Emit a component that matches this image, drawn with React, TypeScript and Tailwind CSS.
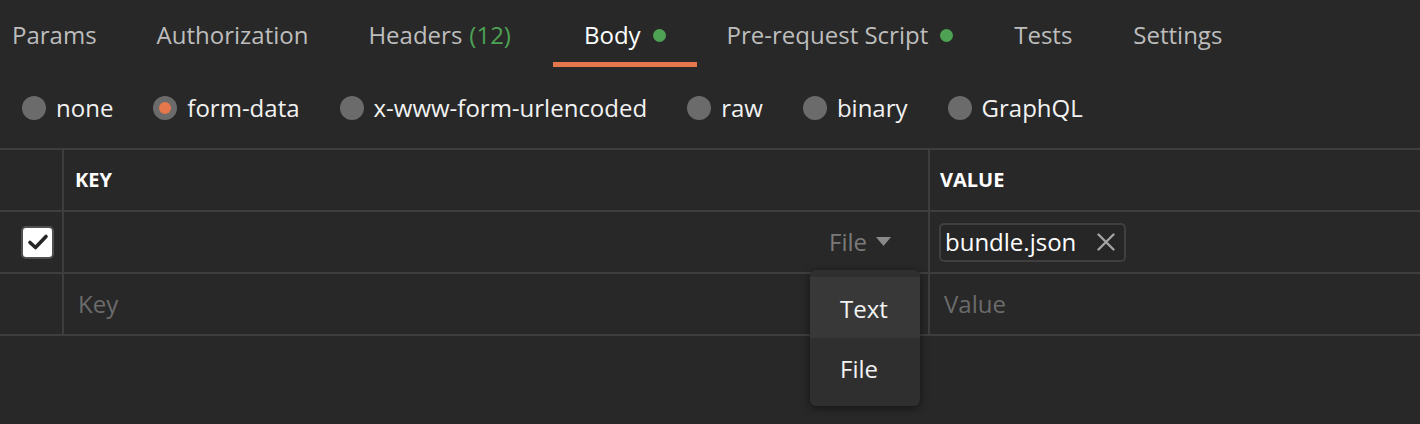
import React from "react";

const font = { fontFamily: '"Open Sans", "Noto Sans", sans-serif' };

function Dot() {
  return <span className="inline-block w-[13px] h-[13px] rounded-full bg-[#4da254] ml-[12px]" />;
}

function Radio({ label, selected }: { label: string; selected?: boolean }) {
  return (
    <div className="flex items-center">
      <span className="w-[24px] h-[24px] rounded-full bg-[#6b6b6b] flex items-center justify-center">
        {selected && <span className="w-[12px] h-[12px] rounded-full bg-[#e5774c]" />}
      </span>
      <span className="ml-[10px] text-[24px] text-[#f2f2f2] leading-none">{label}</span>
    </div>
  );
}

export default function App() {
  return (
    <div className="w-[1420px] h-[424px] bg-[#282828] overflow-hidden relative" style={font}>
      {/* Tabs */}
      <div className="flex h-[67px] text-[24px] text-[#bdbdbd]">
        <div className="flex items-center pt-[3px] pl-[12px]">Params</div>
        <div className="flex items-center pt-[3px] ml-[60px]">Authorization</div>
        <div className="flex items-center pt-[3px] ml-[60px]">
          Headers<span className="text-[#4da254] ml-[7px]">(12)</span>
        </div>
        <div className="relative flex items-center pt-[3px] ml-[42px] px-[31px] text-white">
          Body
          <Dot />
          <span className="absolute left-0 right-0 bottom-0 h-[5px] bg-[#e5774c]" />
        </div>
        <div className="flex items-center pt-[3px] ml-[30px]">
          Pre-request Script
          <Dot />
        </div>
        <div className="flex items-center pt-[3px] ml-[61px]">Tests</div>
        <div className="flex items-center pt-[3px] ml-[61px]">Settings</div>
      </div>

      {/* Radios */}
      <div className="flex items-center h-[81px] pl-[22px] gap-[40px]">
        <Radio label="none" />
        <Radio label="form-data" selected />
        <Radio label="x-www-form-urlencoded" />
        <Radio label="raw" />
        <Radio label="binary" />
        <Radio label="GraphQL" />
      </div>

      {/* Table */}
      <div className="border-t-2 border-[#3e3e3e]">
        <div className="flex h-[62px] border-b-2 border-[#3e3e3e]">
          <div className="w-[64px] border-r-2 border-[#3e3e3e] shrink-0" />
          <div className="w-[866px] border-r-2 border-[#3e3e3e] shrink-0 flex items-center pl-[11px] text-[20px] font-bold text-white">
            KEY
          </div>
          <div className="flex-1 flex items-center pl-[10px] text-[20px] font-bold text-white">VALUE</div>
        </div>
        <div className="flex h-[62px] border-b-2 border-[#3e3e3e]">
          <div className="w-[64px] border-r-2 border-[#3e3e3e] shrink-0 flex items-center pl-[21px]">
            <span className="w-[33px] h-[33px] rounded-[5px] bg-white border-2 border-[#505050] flex items-center justify-center">
              <svg width="22" height="18" viewBox="0 0 22 18">
                <path d="M3 9.5 L8.5 14.5 L19 3.5" fill="none" stroke="#262626" strokeWidth="3.6" strokeLinecap="round" strokeLinejoin="round" />
              </svg>
            </span>
          </div>
          <div className="w-[866px] border-r-2 border-[#3e3e3e] shrink-0 flex items-center justify-end pr-[37px]">
            <span className="text-[24px] text-[#7a7a7a]">File</span>
            <svg className="ml-[9px]" width="15" height="10" viewBox="0 0 15 10">
              <path d="M0 0 L15 0 L7.5 9 Z" fill="#8a8a8a" />
            </svg>
          </div>
          <div className="flex-1 flex items-center pl-[9px]">
            <div className="h-[39px] w-[187px] rounded-[5px] border-2 border-[#3f3f3f] bg-[#262626] flex items-center pl-[4px]">
              <span className="text-[24px] text-white leading-none">bundle.json</span>
              <svg className="ml-[21px]" width="18" height="18" viewBox="0 0 18 18">
                <path d="M1.5 1.5 L16.5 16.5 M16.5 1.5 L1.5 16.5" stroke="#a3a3a3" strokeWidth="2.4" strokeLinecap="round" />
              </svg>
            </div>
          </div>
        </div>
        <div className="flex h-[62px] border-b-2 border-[#3e3e3e]">
          <div className="w-[64px] border-r-2 border-[#3e3e3e] shrink-0" />
          <div className="w-[866px] border-r-2 border-[#3e3e3e] shrink-0 flex items-center pl-[14px] text-[24px] text-[#6b6b6b]">
            Key
          </div>
          <div className="flex-1 flex items-center pl-[14px] text-[24px] text-[#6b6b6b]">Value</div>
        </div>
      </div>

      {/* Dropdown menu */}
      <div className="absolute left-[810px] top-[270px] w-[110px] rounded-[6px] bg-[#2f2f2f] py-[7px] shadow-[0_2px_8px_rgba(0,0,0,0.5)]">
        <div className="h-[61px] bg-[#383838] flex items-center pl-[30px] pt-[2px] text-[24px] text-[#f2f2f2]">Text</div>
        <div className="h-[61px] flex items-center pl-[30px] text-[24px] text-[#f2f2f2]">File</div>
      </div>
    </div>
  );
}
